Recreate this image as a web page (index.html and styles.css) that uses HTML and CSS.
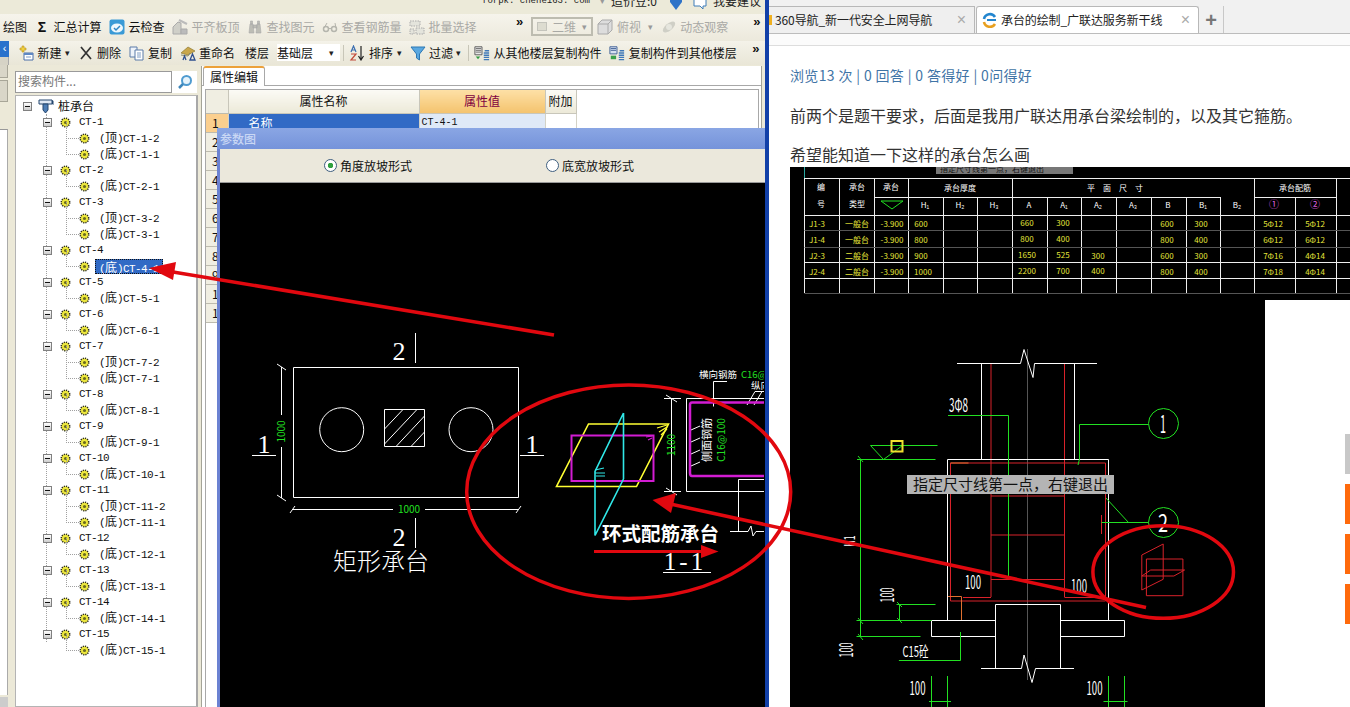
FILE: index.html
```html
<!DOCTYPE html>
<html lang="zh-CN">
<head>
<meta charset="utf-8">
<title>承台的绘制</title>
<link rel="stylesheet" href="styles.css">
</head>
<body>
<svg class="defs" width="0" height="0" aria-hidden="true">
  <symbol id="i-gear" viewBox="0 0 12 12"><circle cx="6" cy="6" r="4.6" fill="#f2ee3a" stroke="#2a2a20" stroke-width="1.7" stroke-dasharray="1.3 1.1"/><circle cx="6" cy="6" r="1.7" fill="#6a6a20"/><circle cx="6" cy="6" r="3.2" fill="none" stroke="#e8e040" stroke-width="1"/></symbol>
  <symbol id="i-pile" viewBox="0 0 16 16"><path d="M1 2h13v4H1z" fill="#dfe8f4" stroke="#24466e"/><path d="M14 2l1.5 1v4l-1.5-1z" fill="#24466e"/><path d="M5 6h5v6l-2.500 3-2.500-3z" fill="#4d7db5" stroke="#24466e"/></symbol>
  <symbol id="i-cloud" viewBox="0 0 16 16"><rect x=".5" y=".5" width="15" height="15" rx="2" fill="#3a9ad6"/><ellipse cx="8" cy="9" rx="6" ry="4.500" fill="#eef7fc"/><path d="M5 9l2 2 4-4" fill="none" stroke="#3187c4" stroke-width="1.500"/></symbol>
  <symbol id="i-align" viewBox="0 0 16 16"><path d="M1 15V8l5-5 3 1v11z" fill="#cfcfc8" stroke="#aaa"/><path d="M9 15v-5h6v5z" fill="#bbb" stroke="#aaa"/><path d="M7 1l8 4" stroke="#bbb" stroke-width="2"/></symbol>
  <symbol id="i-binoc" viewBox="0 0 16 16"><path d="M2 14l1-9h3l1 9zM9 14l1-9h3l1 9zM6 6h4v3H6zM3.500 2h2v3h-2zM10.500 2h2v3h-2z" fill="#bdbdb5" stroke="#aaa" stroke-width=".6"/></symbol>
  <symbol id="i-glass" viewBox="0 0 16 16"><circle cx="4" cy="10" r="2.500" fill="none" stroke="#b5b5ad" stroke-width="1.500"/><circle cx="12" cy="10" r="2.500" fill="none" stroke="#b5b5ad" stroke-width="1.500"/><path d="M6 9.500h4M2 9l3-5M14 9l-1-5" stroke="#b5b5ad" fill="none"/></symbol>
  <symbol id="i-batch" viewBox="0 0 16 16"><path d="M1 2h10v5H1zM1 10h4v5H1zM7 9h8v6H7z" fill="#e4e4dc" stroke="#aaa" stroke-dasharray="1.500 1"/></symbol>
  <symbol id="i-cube" viewBox="0 0 16 16"><path d="M1 5l4-4h10v10l-4 4H1z" fill="#ddd" stroke="#aaa"/><path d="M1 5h10v10M11 5l4-4" fill="none" stroke="#aaa"/></symbol>
  <symbol id="i-orbit" viewBox="0 0 16 16"><ellipse cx="8" cy="8" rx="7.500" ry="3.500" transform="rotate(-40 8 8)" fill="#cfcfc6"/><circle cx="8" cy="8" r="3" fill="#e6e6de"/></symbol>
  <symbol id="i-new" viewBox="0 0 16 16"><path d="M2 3h2V1h2v2h2v2H6v2H4V5H2z" fill="#f0d040" stroke="#b89020" stroke-width=".6"/><path d="M6 8h9v7H6z" fill="#fff" stroke="#4a6fa8"/><path d="M6 8h9v2H6z" fill="#5f88c4"/><path d="M8 12h5" stroke="#7a9ac8"/></symbol>
  <symbol id="i-del" viewBox="0 0 16 16"><path d="M3 2l10 12M13 2L3 14" stroke="#333" stroke-width="1.700" fill="none"/></symbol>
  <symbol id="i-copy" viewBox="0 0 16 16"><path d="M1 2h7v10H1z" fill="#eef3fa" stroke="#5a7aa8"/><path d="M6 5h8v10H6z" fill="#fff" stroke="#5a7aa8"/><path d="M8 8h4M8 10h4M8 12h4" stroke="#7f9cc4"/></symbol>
  <symbol id="i-ren" viewBox="0 0 16 16"><path d="M1 8l7-6 7 4-7 4z" fill="#c9a74c" stroke="#8f7a30" stroke-width=".7"/><path d="M1 10l7 1 2-3" fill="none" stroke="#8a8a70"/><path d="M3 15l1.500-4 1.500 4M10 15l2.500-6 2.500 6z" fill="none" stroke="#2e4f8f" stroke-width="1.300"/></symbol>
  <symbol id="i-az" viewBox="0 0 16 16"><path d="M2 7l2.500-6L7 7M3 5h3" fill="none" stroke="#3a6db0" stroke-width="1.200"/><path d="M2 9h5l-5 6h5" fill="none" stroke="#c24a3a" stroke-width="1.200"/><path d="M12 1v13M9.500 11l2.500 4 2.500-4" fill="none" stroke="#222" stroke-width="1.200"/></symbol>
  <symbol id="i-filter" viewBox="0 0 16 16"><path d="M1 2h14L9.500 9v6l-3-2V9z" fill="#5aa8e0" stroke="#2d78b4"/></symbol>
  <symbol id="i-from" viewBox="0 0 18 16"><path d="M1 1h8v9H1z" fill="#e8e8e8" stroke="#555"/><path d="M2 3h6M2 5h6M2 7h6" stroke="#666"/><path d="M2 12h5l-2.500 3z" fill="#2f9a3f"/><path d="M11 8h6M11 10.500h6M11 13h6M11 15.500h6M12 5.500h5" stroke="#3f78b8" stroke-width="1.500"/></symbol>
  <symbol id="i-to" viewBox="0 0 18 16"><path d="M1 1h8v8H1z" fill="#d5e0f0" stroke="#3a5a90"/><path d="M2 3h6M2 5h6" stroke="#3a5a90"/><path d="M2 11h6v4H2z" fill="#3aa04a"/><path d="M11 8h6M11 10.500h6M11 13h6M11 15.500h6M12 5.500h5" stroke="#3f78b8" stroke-width="1.500"/></symbol>
  <symbol id="i-mag" viewBox="0 0 16 16"><circle cx="9.500" cy="6.500" r="4.500" fill="#e6f3fb" stroke="#4f9bd0" stroke-width="2"/><path d="M6 10l-4 4" stroke="#3d86ba" stroke-width="2.500"/></symbol>
</svg>

<div class="screen">
  <section class="app">
    <div class="topbar">
      <span class="url">forpk. chene163. com</span><span class="tiny top-arrow">▾</span><span class="dou">造价豆:0</span>
      <svg class="top-ic" viewBox="0 0 14 14"><path d="M1 0h12v5l-6 8-6-8z" fill="#2e73c8"/></svg>
      <svg class="top-ic spk" viewBox="0 0 14 14"><path d="M1 0v9h6l3 3V9h3V0" fill="#fff" stroke="#3f7db8"/></svg>
      <span class="sug">我要建议</span>
    </div>

    <div class="bar bar-one">
      <span class="label first">绘图</span>
      <span class="tool mid"><span class="ic sigma">Σ</span><span class="label">汇总计算</span></span>
      <span class="tool"><svg class="ic"><use href="#i-cloud"/></svg><span class="label">云检查</span></span>
      <span class="tool off"><svg class="ic"><use href="#i-align"/></svg><span class="label">平齐板顶</span></span>
      <span class="tool off"><svg class="ic"><use href="#i-binoc"/></svg><span class="label">查找图元</span></span>
      <span class="tool off"><svg class="ic"><use href="#i-glass"/></svg><span class="label">查看钢筋量</span></span>
      <span class="tool off"><svg class="ic"><use href="#i-batch"/></svg><span class="label">批量选择</span></span>
      <span class="more more-a">»</span>
      <span class="combo off"><span class="swatch"></span><span>二维</span><span class="tiny">▾</span></span>
      <span class="tool off snug"><svg class="ic"><use href="#i-cube"/></svg><span class="label">俯视</span><span class="tiny">▾</span></span>
      <span class="tool off"><svg class="ic"><use href="#i-orbit"/></svg><span class="label">动态观察</span></span>
      <span class="more more-b">»</span>
    </div>

    <div class="bar bar-two">
      <span class="corner"><span class="corner-blue">‹</span><span class="corner-gray"></span></span>
      <span class="tool head"><svg class="ic"><use href="#i-new"/></svg><span class="label">新建</span><span class="tiny dark">▾</span></span>
      <span class="tool"><svg class="ic"><use href="#i-del"/></svg><span class="label">删除</span></span>
      <span class="tool"><svg class="ic"><use href="#i-copy"/></svg><span class="label">复制</span></span>
      <span class="tool"><svg class="ic"><use href="#i-ren"/></svg><span class="label">重命名</span></span>
      <span class="label floors">楼层</span>
      <span class="floor-select"><span>基础层</span><span class="tiny dark">▾</span></span>
      <span class="sep"></span>
      <span class="tool tight"><svg class="ic"><use href="#i-az"/></svg><span class="label">排序</span><span class="tiny dark">▾</span></span>
      <span class="tool"><svg class="ic"><use href="#i-filter"/></svg><span class="label">过滤</span><span class="tiny dark">▾</span></span>
      <span class="sep sep-b"></span>
      <span class="tool tight"><svg class="ic"><use href="#i-from"/></svg><span class="label">从其他楼层复制构件</span></span>
      <span class="tool"><svg class="ic"><use href="#i-to"/></svg><span class="label">复制构件到其他楼层</span></span>
      <span class="more more-c">»</span>
    </div>

    <div class="work">
      <aside class="strip">
        <span class="strip-btn short"></span>
        <span class="strip-btn"></span>
        <span class="strip-list"></span>
        <span class="strip-foot"></span>
      </aside>

      <aside class="side">
        <div class="search">
          <span class="search-input">搜索构件...</span>
          <span class="search-btn"><svg class="ic"><use href="#i-mag"/></svg></span>
        </div>
        <div class="tree">
          <div class="row root"><span class="exp big"></span><svg class="root-ic"><use href="#i-pile"/></svg><span class="zh">桩承台</span></div>
          <div class="branch">
            <div class="row"><span class="exp"></span><svg class="gear"><use href="#i-gear"/></svg><span class="lbl">CT-1</span></div>
            <div class="row kid"><svg class="gear"><use href="#i-gear"/></svg><span class="lbl">(<i>顶</i>)CT-1-2</span></div>
            <div class="row kid"><svg class="gear"><use href="#i-gear"/></svg><span class="lbl">(<i>底</i>)CT-1-1</span></div>
            <div class="row"><span class="exp"></span><svg class="gear"><use href="#i-gear"/></svg><span class="lbl">CT-2</span></div>
            <div class="row kid"><svg class="gear"><use href="#i-gear"/></svg><span class="lbl">(<i>底</i>)CT-2-1</span></div>
            <div class="row"><span class="exp"></span><svg class="gear"><use href="#i-gear"/></svg><span class="lbl">CT-3</span></div>
            <div class="row kid"><svg class="gear"><use href="#i-gear"/></svg><span class="lbl">(<i>顶</i>)CT-3-2</span></div>
            <div class="row kid"><svg class="gear"><use href="#i-gear"/></svg><span class="lbl">(<i>底</i>)CT-3-1</span></div>
            <div class="row"><span class="exp"></span><svg class="gear"><use href="#i-gear"/></svg><span class="lbl">CT-4</span></div>
            <div class="row kid"><svg class="gear"><use href="#i-gear"/></svg><span class="lbl sel">(<i>底</i>)CT-4-1</span></div>
            <div class="row"><span class="exp"></span><svg class="gear"><use href="#i-gear"/></svg><span class="lbl">CT-5</span></div>
            <div class="row kid"><svg class="gear"><use href="#i-gear"/></svg><span class="lbl">(<i>底</i>)CT-5-1</span></div>
            <div class="row"><span class="exp"></span><svg class="gear"><use href="#i-gear"/></svg><span class="lbl">CT-6</span></div>
            <div class="row kid"><svg class="gear"><use href="#i-gear"/></svg><span class="lbl">(<i>底</i>)CT-6-1</span></div>
            <div class="row"><span class="exp"></span><svg class="gear"><use href="#i-gear"/></svg><span class="lbl">CT-7</span></div>
            <div class="row kid"><svg class="gear"><use href="#i-gear"/></svg><span class="lbl">(<i>顶</i>)CT-7-2</span></div>
            <div class="row kid"><svg class="gear"><use href="#i-gear"/></svg><span class="lbl">(<i>底</i>)CT-7-1</span></div>
            <div class="row"><span class="exp"></span><svg class="gear"><use href="#i-gear"/></svg><span class="lbl">CT-8</span></div>
            <div class="row kid"><svg class="gear"><use href="#i-gear"/></svg><span class="lbl">(<i>底</i>)CT-8-1</span></div>
            <div class="row"><span class="exp"></span><svg class="gear"><use href="#i-gear"/></svg><span class="lbl">CT-9</span></div>
            <div class="row kid"><svg class="gear"><use href="#i-gear"/></svg><span class="lbl">(<i>底</i>)CT-9-1</span></div>
            <div class="row"><span class="exp"></span><svg class="gear"><use href="#i-gear"/></svg><span class="lbl">CT-10</span></div>
            <div class="row kid"><svg class="gear"><use href="#i-gear"/></svg><span class="lbl">(<i>底</i>)CT-10-1</span></div>
            <div class="row"><span class="exp"></span><svg class="gear"><use href="#i-gear"/></svg><span class="lbl">CT-11</span></div>
            <div class="row kid"><svg class="gear"><use href="#i-gear"/></svg><span class="lbl">(<i>顶</i>)CT-11-2</span></div>
            <div class="row kid"><svg class="gear"><use href="#i-gear"/></svg><span class="lbl">(<i>底</i>)CT-11-1</span></div>
            <div class="row"><span class="exp"></span><svg class="gear"><use href="#i-gear"/></svg><span class="lbl">CT-12</span></div>
            <div class="row kid"><svg class="gear"><use href="#i-gear"/></svg><span class="lbl">(<i>底</i>)CT-12-1</span></div>
            <div class="row"><span class="exp"></span><svg class="gear"><use href="#i-gear"/></svg><span class="lbl">CT-13</span></div>
            <div class="row kid"><svg class="gear"><use href="#i-gear"/></svg><span class="lbl">(<i>底</i>)CT-13-1</span></div>
            <div class="row"><span class="exp"></span><svg class="gear"><use href="#i-gear"/></svg><span class="lbl">CT-14</span></div>
            <div class="row kid"><svg class="gear"><use href="#i-gear"/></svg><span class="lbl">(<i>底</i>)CT-14-1</span></div>
            <div class="row"><span class="exp"></span><svg class="gear"><use href="#i-gear"/></svg><span class="lbl">CT-15</span></div>
          </div>
          <div class="tail">
            <div class="row kid"><svg class="gear"><use href="#i-gear"/></svg><span class="lbl">(<i>底</i>)CT-15-1</span></div>
          </div>
        </div>
      </aside>

      <main class="panel">
        <div class="tabstrip"><span class="tab">属性编辑</span></div>
        <div class="sheet">
          <table class="props">
            <thead><tr><th class="num"></th><th class="name">属性名称</th><th class="val">属性值</th><th class="add">附加</th></tr></thead>
            <tbody>
              <tr class="active"><td class="num">1</td><td class="name">名称</td><td class="val">CT-4-1</td><td class="add"></td></tr>
              <tr><td class="num">2</td><td></td><td></td><td></td></tr>
              <tr><td class="num">3</td><td></td><td></td><td></td></tr>
              <tr><td class="num">4</td><td></td><td></td><td></td></tr>
              <tr><td class="num">5</td><td></td><td></td><td></td></tr>
              <tr><td class="num">6</td><td></td><td></td><td></td></tr>
              <tr><td class="num">7</td><td></td><td></td><td></td></tr>
              <tr><td class="num">8</td><td></td><td></td><td></td></tr>
              <tr><td class="num">9</td><td></td><td></td><td></td></tr>
              <tr><td class="num">10</td><td></td><td></td><td></td></tr>
              <tr><td class="num">11</td><td></td><td></td><td></td></tr>
            </tbody>
          </table>
        </div>
      </main>
    </div>

    <div class="modal">
      <div class="modal-title">参数图</div>
      <div class="modal-options">
        <span class="radio on"><span class="dot"></span>角度放坡形式</span>
        <span class="radio"><span class="dot"></span>底宽放坡形式</span>
      </div>
      <svg class="cad" viewBox="220 183 544 524">
        <g class="w">
          <path d="M293.500 367.500H518.500V497.500H293.500Z"/>
          <path d="M415.500 333V363M415.500 518V548M252 455.500H276M520 455.500H544"/>
          <circle cx="341.700" cy="429.700" r="22"/>
          <circle cx="471" cy="429.700" r="22"/>
          <path d="M384.500 409.500H424.500V446.500H384.500Z"/>
          <path d="M384.500 429L403 409.500M384.500 444L417 409.500M396 446.500L424.500 416M411 446.500L424.500 432"/>
          <path d="M281.500 367V498M277 364L286 370M277 495L286 501M293 509.500H518M290 513L295 506M516 513L521 506"/>
          <path d="M664 398.500H681M664 491.500H681M671.500 398.500V491.500M666 395L677 402M666 488L677 495"/>
          <path d="M764 398.500H686.500V491.500H764M738.500 531.500V479.500H764M730 531.500H748L751 526L753 536L756 531.500H764"/>
          <path d="M727 381.500H713.500V406.500M755 391.500H764M755 391.500L747 405M762 391.500L754 405"/>
          <path d="M663 572.500H711"/>
          <path d="M691 430L700 426M691 442L700 438M691 454L700 450M691 466L700 462"/>
        </g>
        <rect class="mask" x="393" y="503" width="32" height="12"/>
        <text class="t-green t10" x="409" y="513" text-anchor="middle">1000</text>
        <rect class="mask" x="276" y="415" width="12" height="32"/>
        <text class="t-green t10" transform="translate(285 431.500) rotate(-90)" text-anchor="middle">1000</text>
        <text class="t-white serif t26" x="399" y="360" text-anchor="middle">2</text>
        <text class="t-white serif t26" x="399" y="546" text-anchor="middle">2</text>
        <text class="t-white serif t26" x="264" y="452.500" text-anchor="middle">1</text>
        <text class="t-white serif t26" x="532" y="452.500" text-anchor="middle">1</text>
        <text class="t-white t24" x="333" y="570">矩形承台</text>
        <path class="yellow" d="M588.500 424H668.500L636.500 486.500H556.500Z"/>
        <path class="yellow thin" d="M657 428L667 425M659 432L667 427M661 435L667 429"/>
        <path class="magenta" d="M571.500 435.500H653.500V481H571.500Z"/>
        <path class="magenta thin" d="M646 437L652 436M648 440L652 438"/>
        <path class="cyan" d="M623.500 413V479M623.500 413L595 471.500V535.500L623.500 479"/>
        <path class="cyan thin" d="M595 470L604 468M595 473L605 473M596 476L605 476"/>
        <path class="magenta thick" d="M764 402.500H692Q690 402.500 690 405V473Q690 476 692 476H764"/>
        <text class="t-green t10" transform="translate(675 445) rotate(-90)" text-anchor="middle">1100</text>
        <text class="t-white t9b" x="699" y="378">横向钢筋</text>
        <text class="t-green t9b" x="741" y="378">C16@1</text>
        <text class="t-white t9b" x="751" y="389">纵向</text>
        <text class="t-white t11" transform="translate(711 440) rotate(-90)" text-anchor="middle">侧面钢筋</text>
        <text class="t-green t10" transform="translate(725 440) rotate(-90)" text-anchor="middle">C16@100</text>
        <text class="t-white t-bold t19" x="602" y="541">环式配筋承台</text>
        <text class="t-white serif t25 wide" x="685" y="570" text-anchor="middle">1-1</text>
        <path class="red-line" d="M594 551.500H704"/>
        <path class="red-fill" d="M718.500 551.500L701 545V558Z"/>
      </svg>
    </div>
  </section>

  <section class="browser">
    <div class="tabs">
      <span class="btab plain"><span class="fav-360"></span><span class="btab-text">360导航_新一代安全上网导航</span><span class="close">×</span></span>
      <span class="btab current">
        <svg class="fav" viewBox="0 0 16 16"><path d="M13 5A6 6 0 0 0 2 7" fill="none" stroke="#2386cf" stroke-width="2.600"/><path d="M2 10a6 6 0 0 0 11 2" fill="none" stroke="#e8a020" stroke-width="2.600"/><path d="M5 8h9" stroke="#2386cf" stroke-width="2"/></svg>
        <span class="btab-text">承台的绘制_广联达服务新干线</span><span class="close">×</span>
      </span>
      <span class="plus">+</span>
    </div>
    <div class="subbar"></div>
    <article class="page">
      <p class="stats">浏览13 次 | 0 回答 | 0 答得好 | 0问得好</p>
      <p class="para one">前两个是题干要求，后面是我用广联达用承台梁绘制的，以及其它箍筋。</p>
      <p class="para two">希望能知道一下这样的承台怎么画</p>

      <svg class="shot-top" viewBox="790 167 560 133">
        <rect class="black" x="790" y="167" width="560" height="133"/>
        <path class="teal" d="M804.500 167V178"/>
        <rect class="shot-gray" x="936" y="167" width="137" height="7"/>
        <text class="t-dark t9" x="940" y="172">指定尺寸线第一点，右键退出</text>
        <g class="w-soft">
          <path d="M804.500 178.500H1350M874 197.500H1220M1254 197.500H1336M804.500 215.500H1350M804.500 262.500H1350M804.500 278.500H1350"/>
          <path d="M804.500 178V293M839.500 178V293M874.500 178V293M908.500 178V293M943.500 197V293M977.500 197V293M1012.500 178V293M1047.500 197V293M1081.500 197V293M1116.500 197V293M1151.500 197V293M1186.500 197V293M1220.500 197V293M1254.500 178V293M1295.500 197V293M1336.500 178V293"/>
        </g>
        <g class="w-dim"><path d="M804.500 230.500H1350M804.500 247.500H1350M804.500 293.500H1350"/></g>
        <g class="t-white t9 tc">
          <text x="821" y="190">编</text><text x="821" y="207">号</text>
          <text x="857" y="190">承台</text><text x="857" y="207">类型</text>
          <text x="891" y="190">承台</text>
          <text x="960" y="191">承台厚度</text>
          <text x="1115" y="191">平　面　尺　寸</text>
          <text x="1295" y="191">承台配筋</text>
          <text x="925" y="208">H₁</text><text x="960" y="208">H₂</text><text x="994" y="208">H₃</text>
          <text x="1029" y="208">A</text><text x="1064" y="208">A₁</text><text x="1098" y="208">A₂</text><text x="1133" y="208">A₃</text>
          <text x="1168" y="208">B</text><text x="1203" y="208">B₁</text><text x="1237" y="208">B₂</text>
        </g>
        <path class="green-t" d="M881 201H903L892 209Z"/>
        <g class="t-pink t10 tc"><text x="1274" y="208">①</text><text x="1315" y="208">②</text></g>
        <g class="t-yellow t9 tc">
          <text x="817" y="227">J1-3</text><text x="857" y="227">一般台</text><text x="892" y="227">-3.900</text><text x="921" y="227">600</text><text x="1027" y="226">660</text><text x="1063" y="226">300</text><text x="1167" y="227">600</text><text x="1201" y="227">300</text><text x="1273" y="227">5Φ12</text><text x="1315" y="227">5Φ12</text>
          <text x="817" y="243">J1-4</text><text x="857" y="243">一般台</text><text x="892" y="243">-3.900</text><text x="921" y="243">800</text><text x="1027" y="242">800</text><text x="1063" y="242">400</text><text x="1167" y="243">800</text><text x="1201" y="243">400</text><text x="1273" y="243">6Φ12</text><text x="1315" y="243">6Φ12</text>
          <text x="817" y="259">J2-3</text><text x="857" y="259">二般台</text><text x="892" y="259">-3.900</text><text x="921" y="259">900</text><text x="1027" y="258">1650</text><text x="1063" y="258">525</text><text x="1098" y="259">300</text><text x="1167" y="259">600</text><text x="1201" y="259">300</text><text x="1273" y="259">7Φ16</text><text x="1315" y="259">4Φ14</text>
          <text x="817" y="275">J2-4</text><text x="857" y="275">二般台</text><text x="892" y="275">-3.900</text><text x="923" y="275">1000</text><text x="1027" y="274">2200</text><text x="1063" y="274">700</text><text x="1098" y="274">400</text><text x="1167" y="275">800</text><text x="1201" y="275">400</text><text x="1273" y="275">7Φ18</text><text x="1315" y="275">4Φ14</text>
        </g>
      </svg>

      <div class="shot-row">
        <svg class="shot-main" viewBox="790 300 475 407">
          <rect class="black" x="790" y="300" width="475" height="407"/>
          <path class="gray-line" d="M1027.500 349V680"/>
          <g class="red-thin">
            <path d="M991 363V597M1064.500 363V597M950.500 463H1105.500V601H950.500ZM991 496H1064.500M991 535H1064.500M991 579.500H1064.500M963 597.500H991M1064.500 597.500H1100.500M1101.500 515V534"/>
            <path d="M1141.800 555L1163.200 544V579.300L1141.800 590ZM1146.400 559H1182.900V595.700H1146.400ZM1141.800 576L1150.700 570H1184.600L1173.900 576H1141.800"/>
          </g>
          <path class="orange-thin" d="M950.500 463H968.500M947.500 596.500H961.500V620.500"/>
          <g class="w">
            <path d="M957 363.500H1020.500L1024 349.500L1033 377.500L1034.500 363.500H1097"/>
            <path d="M981.500 363.500V459.500M1074.500 363.500V459.500M947.500 620.500V459.500H1108.500V620.500"/>
            <path d="M995.500 620.500H931.500V636.500H995.500M1060.500 620.500H1124.500V636.500H1060.500M995.500 668.500V604.500H1060.500V668.500"/>
            <path d="M981 668.500H1021.500L1024 655L1032 682.500L1035.500 668.500H1074"/>
          </g>
          <g class="g">
            <path d="M948 415.500H1008.500V577"/>
            <circle cx="1163.500" cy="423.500" r="15"/>
            <circle cx="1163.500" cy="522.500" r="15"/>
            <path d="M1148.500 424.500H1079.500V459M1079.500 459L1078 465M1148.500 522.500H1101.500M1128.500 522.500L1106 498"/>
            <path d="M870.500 445.500H937.500M870.500 445.500L883.500 459.500L902.500 445.500M857 459.500H935.500M860.500 459V637M856.500 620.500H931.500M856.500 636.500H920.500"/>
            <path d="M899.500 604.500V620.500M896.500 604.500H935.500M898.900 660.500H960.500V632"/>
            <path d="M931.500 676V707M947.500 676V707M929 701.500H951M1108.500 676V707M1124.500 676V707M1103.500 701.500H1127.500"/>
            <path d="M858 456L863 462M858 618L863 624M858 634L863 640M897 602L902 607M897 618L902 623"/>
          </g>
          <rect class="snap" x="891.500" y="441" width="11" height="10.500"/>
          <rect class="label-bg" x="907" y="475" width="207" height="19"/>
          <text class="t-dark t15" x="913" y="490">指定尺寸线第一点，右键退出</text>
          <g class="t-white cadtext">
            <text x="949" y="412" textLength="19" lengthAdjust="spacingAndGlyphs">3Φ8</text>
            <text x="1160" y="433" class="big-n" textLength="6" lengthAdjust="spacingAndGlyphs">1</text>
            <text x="1158" y="532" class="big-n" textLength="10" lengthAdjust="spacingAndGlyphs">2</text>
            <text x="902.500" y="657" class="c15" textLength="26" lengthAdjust="spacingAndGlyphs">C15砼</text>
            <text x="965" y="588.500" textLength="16" lengthAdjust="spacingAndGlyphs">100</text>
            <text x="1071" y="592.500" textLength="16" lengthAdjust="spacingAndGlyphs">100</text>
            <text x="909.500" y="695" textLength="16" lengthAdjust="spacingAndGlyphs">100</text>
            <text x="1086.500" y="695" textLength="16" lengthAdjust="spacingAndGlyphs">100</text>
            <text class="c15" transform="translate(854.500 546.500) rotate(-90)" textLength="11" lengthAdjust="spacingAndGlyphs">H1</text>
            <text transform="translate(893.500 602.500) rotate(-90)" textLength="15" lengthAdjust="spacingAndGlyphs">100</text>
            <text transform="translate(852.500 657.500) rotate(-90)" textLength="15" lengthAdjust="spacingAndGlyphs">100</text>
          </g>
        </svg>
        <div class="rail">
          <span class="rail-box gray"></span>
          <span class="rail-box"></span>
          <span class="rail-box"></span>
          <span class="rail-box"></span>
        </div>
      </div>
    </article>
  </section>

  <svg class="marks" viewBox="0 0 1350 707">
    <path class="mark" d="M554 335L170 271.500"/>
    <path class="mark-head" d="M149 268L176 262L173 280Z"/>
    <ellipse class="mark" cx="628.700" cy="491.700" rx="162" ry="106.700"/>
    <path class="mark" d="M1146 607.500L668 503.500"/>
    <path class="mark-head" d="M652.500 500L676 493L671 513Z"/>
    <ellipse class="mark" cx="1163.200" cy="572" rx="70.300" ry="46.300"/>
  </svg>
</div>
</body>
</html>
```
FILE: styles.css
```css
* { box-sizing: border-box; }
html, body { margin: 0; height: 100%; background: #fff; overflow: hidden; }
body { font: 12px/16px "Noto Sans CJK SC", "Liberation Sans", sans-serif; color: #111; }
.defs { position: absolute; }

.screen { position: relative; display: flex; width: 1350px; height: 707px; overflow: hidden; }
.marks { position: absolute; inset: 0; width: 1350px; height: 707px; pointer-events: none; }
.mark { fill: none; stroke: #e1080f; stroke-width: 3.5; }
.mark-head { fill: #e1080f; }

/* ---------- left application ---------- */
.app { position: relative; flex: none; width: 769px; height: 707px; display: flex; flex-direction: column; background: #ece9d8; border-right: 4px solid #1240a8; overflow: hidden; }

.topbar { height: 14px; flex: none; display: flex; align-items: flex-start; background: #ecead9; padding-left: 482px; overflow: hidden; line-height: 14px; color: #222; }
.topbar > * { margin-top: -6px; }
.url { font: 9px/14px "Liberation Mono", monospace; width: 117px; white-space: nowrap; overflow: hidden; }
.top-arrow { width: 7px; color: #222; }
.dou { margin-left: 6px; width: 58px; white-space: nowrap; }
.top-ic { width: 14px; height: 14px; flex: none; margin-top: -3px; }
.spk { margin-left: 10px; }
.sug { margin-left: 6px; }
.tiny { flex: none; width: 6px; font-size: 9px; color: #999; text-align: center; }
.tiny.dark { color: #222; }

.bar { flex: none; display: flex; align-items: center; white-space: nowrap; }
.bar-one { height: 27px; padding-bottom: 2px; background: linear-gradient(#f6f4ec, #ece9dc); }
.bar-two { height: 24px; padding-bottom: 1px; background: linear-gradient(#f4f2e9, #e9e6d7); }
.label { flex: none; }
.first { margin-left: 3px; }
.tool { flex: none; display: flex; align-items: center; gap: 3.5px; margin-left: 7.5px; }
.tool .tiny { margin-left: -1px; }
.off { color: #a9a9a5; }
.ic { width: 16px; height: 16px; flex: none; }
.sigma { font: bold 14px/16px "Liberation Sans", sans-serif; text-align: center; color: #111; }
.mid { margin-left: 7px; }
.more { flex: none; font: bold 13px/10px "Liberation Sans", sans-serif; color: #111; align-self: flex-start; margin-top: 3px; width: 8px; }
.more-a { margin-left: 39.5px; }
.more-b { margin-left: 25px; }
.more-c { margin-left: 15.5px; }
.combo { flex: none; display: flex; align-items: center; gap: 5px; width: 62px; height: 19px; margin-left: 7px; padding: 0 4px; border: 2px solid #bdbcb0; }
.swatch { width: 13px; height: 9px; background: #dddcd0; border: 1px solid #c4c4bc; }
.snug { margin-left: 4px; gap: 4px; }
.snug .tiny { margin-left: 2px; }
.corner { flex: none; width: 9px; align-self: stretch; margin-bottom: -1px; display: flex; flex-direction: column; }
.corner-blue { flex: 1; background: #2a72cc; color: #fff; font: 11px/14px "Liberation Sans", sans-serif; text-align: center; }
.corner-gray { height: 8px; background: #d6d3c6; border-right: 1px solid #aaa; }
.head { margin-left: 9px; }
.floors { margin-left: 10px; }
.floor-select { flex: none; display: flex; justify-content: space-between; align-items: center; width: 63px; height: 17px; margin-left: 8px; padding: 0 6px 0 0; background: #fff; }
.sep { flex: none; width: 1px; height: 16px; background: #c8c6b8; margin-left: 3px; }
.sep-b { margin-left: 6px; }
.tight { margin-left: 5px; gap: 4px; }

.work { flex: 1; display: flex; min-height: 0; }
.strip { flex: none; width: 14px; display: flex; flex-direction: column; gap: 2px; }
.strip-btn { flex: none; width: 8px; height: 22px; background: #d9d6c8; border: 1px solid #a8a698; border-left: 0; }
.strip-btn.short { height: 13px; border-top: 0; }
.strip-list { flex: 1; width: 8px; margin-top: 25px; background: #fff; border-top: 1px solid #999; border-right: 1px solid #aaa; }
.strip-foot { flex: none; width: 8px; height: 10px; background: #ccc; }

.side { flex: none; width: 184px; display: flex; flex-direction: column; padding-top: 6px; gap: 2px; }
.search { flex: none; display: flex; height: 22px; margin-left: 1px; margin-right: 1px; }
.search-input { flex: 1; background: #fff; border: 1px solid #9a9a9a; color: #777; padding-left: 2px; line-height: 18px; }
.search-btn { width: 25px; flex: none; background: #fff; display: flex; align-items: center; justify-content: center; }
.tree { flex: 1; margin-left: 1px; background: #fff; border: 1px solid #b4b4b4; border-right: 2px solid #a8a8a8; padding-top: 2px; }
.row { position: relative; display: flex; align-items: center; height: 16px; }
.root { margin-left: 7px; gap: 4px; }
.root-ic { width: 16px; height: 16px; flex: none; margin-left: 2px; }
.root .exp { margin-left: 0; margin-right: 0; }
.exp { flex: none; width: 9px; height: 9px; margin-left: -4px; background: linear-gradient(#fff, #ccc); border: 1px solid #808080; position: relative; }
.exp::after { content: ""; position: absolute; left: 1px; top: 3px; width: 5px; height: 1px; background: #111; }
.branch { margin-left: 30px; border-left: 1px dotted #a0a0a0; }
.branch > .row { gap: 8px; }
.gear { width: 11px; height: 11px; flex: none; }
.kid { padding-left: 32px; gap: 9px; }
.branch > .kid { gap: 9px; }
.kid::before { content: ""; position: absolute; left: 19px; top: -8px; width: 12px; height: 16px; border-left: 1px dotted #a0a0a0; border-bottom: 1px dotted #a0a0a0; }
.tail { margin-left: 31px; }
.lbl { font: 11px/17px "Liberation Mono", monospace; letter-spacing: -.6px; white-space: nowrap; }
.lbl i { font: normal 12px/16px "Noto Sans CJK SC", sans-serif; letter-spacing: 0; }
.sel { background: #316ac5; color: #fff; outline: 1px dotted #111; outline-offset: -1px; margin-left: -4px; padding: 0 4px; height: 15px; line-height: 15px; }
.sel i { line-height: 15px; }

.panel { flex: 1; display: flex; flex-direction: column; margin-left: 3px; margin-right: 3px; border-left: 1px solid #a4a498; border-right: 1px solid #a4a498; background: #fff; margin-top: 1px; }
.tabstrip { flex: none; height: 20px; background: #fff; border-bottom: 1px solid #a8a8a8; padding-left: 1px; }
.tab { display: block; width: 62px; height: 20px; background: #fff; border: 1px solid #a8a8a8; border-top: 2px solid #eca13a; border-bottom: 0; border-radius: 3px 3px 0 0; text-align: center; line-height: 17px; }
.sheet { flex: 1; margin: 3px 2px 0 3px; background: #fff; border: 1px solid #a8a8a8; border-bottom: 0; }
.props { border-collapse: collapse; table-layout: fixed; width: 370px; }
.props th { height: 23px; font-weight: 400; background: linear-gradient(#fbfaf5, #ece9d8); border-right: 1px solid #c8c6ba; border-bottom: 1px solid #c8c6ba; padding: 0; }
.props td { height: 19px; padding: 0; border-right: 1px solid #d4d2c6; border-bottom: 1px solid #d4d2c6; }
.props .num { width: 22px; background: #f0eee2; text-align: left; padding-left: 6px; border-bottom: 1px solid #bdbbae; }
.props .name { width: 191px; }
.props .val { width: 126px; }
.props .add { width: 31px; }
.props th.val { color: #800040; background: linear-gradient(#fde0a6, #f4c36e); }
.active .num { background: #fbcf8e; }
.active .name { background: #316ac5; color: #fff; padding-left: 20px; }
.active .val { background: #dfe9f7; font: 10px/18px "Liberation Mono", monospace; padding-left: 2px; }

/* ---------- dialog over the app ---------- */
.modal { position: absolute; left: 217px; top: 128px; right: 0; bottom: 0; display: flex; flex-direction: column; background: #000; border-left: 3px solid #6b82d2; }
.modal-title { flex: none; height: 21px; margin-left: -3px; padding-left: 3px; background: linear-gradient(#8aa6e4, #7593da); color: #c9d7f4; line-height: 22px; font-weight: 500; }
.modal-options { flex: none; height: 34px; display: flex; align-items: center; padding-left: 104px; gap: 134px; background: #ebe8dc; border-bottom: 1px solid #999; }
.radio { display: flex; align-items: center; gap: 3px; }
.dot { width: 13px; height: 13px; border-radius: 50%; background: #fff; border: 1px solid #3f5f80; }
.on .dot { background: radial-gradient(circle, #2fa03f 0 2.500px, #fff 3px); }
.cad { flex: 1; display: block; width: 544px; height: 524px; background: #000; }

.w path, .w circle, .w { fill: none; stroke: #fff; stroke-width: 1; }
.g path, .g circle, .g { fill: none; stroke: #22e022; stroke-width: 1; }
.mask { fill: #000; }
.yellow { fill: none; stroke: #ffff33; stroke-width: 1.600; }
.magenta { fill: none; stroke: #d21cd2; stroke-width: 2; }
.cyan { fill: none; stroke: #30e8e8; stroke-width: 1.600; }
.thin { stroke-width: 1.200; }
.thick { stroke-width: 2.500; }
.red-line { stroke: #e1080f; stroke-width: 3; fill: none; }
.red-fill { fill: #e1080f; }
svg text { font-family: "Noto Sans CJK SC", sans-serif; }
svg .serif { font-family: "Liberation Serif", serif; }
.t-white { fill: #fff; }
.t-green { fill: #22e022; }
.t-yellow { fill: #e6e63a; }
.t-pink { fill: #e060e0; }
.t-dark { fill: #111; }
.t-bold { font-weight: 700; }
.t9 { font-size: 8px; }
.t9b { font-size: 9.500px; }
.t10 { font-size: 10px; }
.t11 { font-size: 11px; }
.t15 { font-size: 15px; }
.t19 { font-size: 19.500px; }
.t25 { font-size: 25px; }
.wide { letter-spacing: 3px; }
.t26 { font-size: 26px; }
.t24 { font-size: 24px; font-weight: 300; }
.tc text { text-anchor: middle; }
.cadtext { font-size: 18px; }
.big-n { font-size: 24px; }
.c15 { font-size: 15px; }

/* ---------- right browser ---------- */
.browser { flex: 1; min-width: 0; height: 707px; display: flex; flex-direction: column; background: #fff; }
.tabs { flex: none; height: 34px; display: flex; align-items: flex-end; background: #f1f1f1; border-bottom: 1px solid #bcbcbc; overflow: hidden; }
.btab { flex: none; display: flex; align-items: center; height: 28px; margin-bottom: -1px; background: #efefef; border: 1px solid #b8b8b8; border-bottom: 1px solid #bcbcbc; }
.plain { width: 206px; border-left: 0; padding-left: 0; margin-right: 1px; }
.current { width: 223px; background: #fff; border-bottom-color: #fff; border-radius: 3px 3px 0 0; padding-left: 5px; }
.fav-360 { width: 3px; height: 10px; margin-right: 3px; background: #f0b020; }
.fav { width: 16px; height: 16px; flex: none; margin-right: 3px; }
.btab-text { flex: none; color: #222; letter-spacing: -.1px; }
.close { margin-left: auto; margin-right: 8px; color: #aaa; font: 16px/16px "Liberation Sans", sans-serif; }
.plus { flex: none; width: 25px; height: 28px; margin-bottom: -1px; border-right: 1px solid #c8c8c8; color: #777; font: bold 20px/28px "Liberation Sans", sans-serif; text-align: center; }
.subbar { flex: none; height: 12px; background: #fbfbfb; border-bottom: 1px solid #ddd; }
.page { flex: 1; min-height: 0; display: flex; flex-direction: column; padding-left: 21px; overflow: hidden; }
.stats { margin: 20px 0 0; color: #3f74a6; font-size: 14px; line-height: 19px; letter-spacing: .35px; }
.para { margin: 0; color: #333; font-size: 16px; line-height: 22px; }
.one { margin-top: 19px; }
.two { margin-top: 17px; height: 18px; }
.shot-top { flex: none; display: block; width: 560px; height: 133px; margin-top: 6px; }
.shot-row { flex: 1; display: flex; min-height: 0; }
.shot-main { flex: none; display: block; width: 475px; height: 407px; }
.rail { flex: 1; display: flex; flex-direction: column; align-items: flex-end; gap: 10px; padding-top: 134px; }
.rail-box { width: 5px; height: 40px; background: #ff6a0c; }
.rail-box.gray { background: #c8c8c8; }

.black { fill: #000; }
.teal { stroke: #2aa8a0; fill: none; }
.shot-gray { fill: #777; }
.w-soft { fill: none; stroke: #eee; stroke-width: 1; }
.w-dim { fill: none; stroke: #555; stroke-width: 1; }
.green-t { fill: none; stroke: #22e022; }
.gray-line { stroke: #555; fill: none; }
.red-thin { fill: none; stroke: #d8222a; stroke-width: 1; }
.orange-thin { fill: none; stroke: #e07030; stroke-width: 1; }
.snap { fill: none; stroke: #f0e030; stroke-width: 2; }
.label-bg { fill: #b4b4b4; }
```
